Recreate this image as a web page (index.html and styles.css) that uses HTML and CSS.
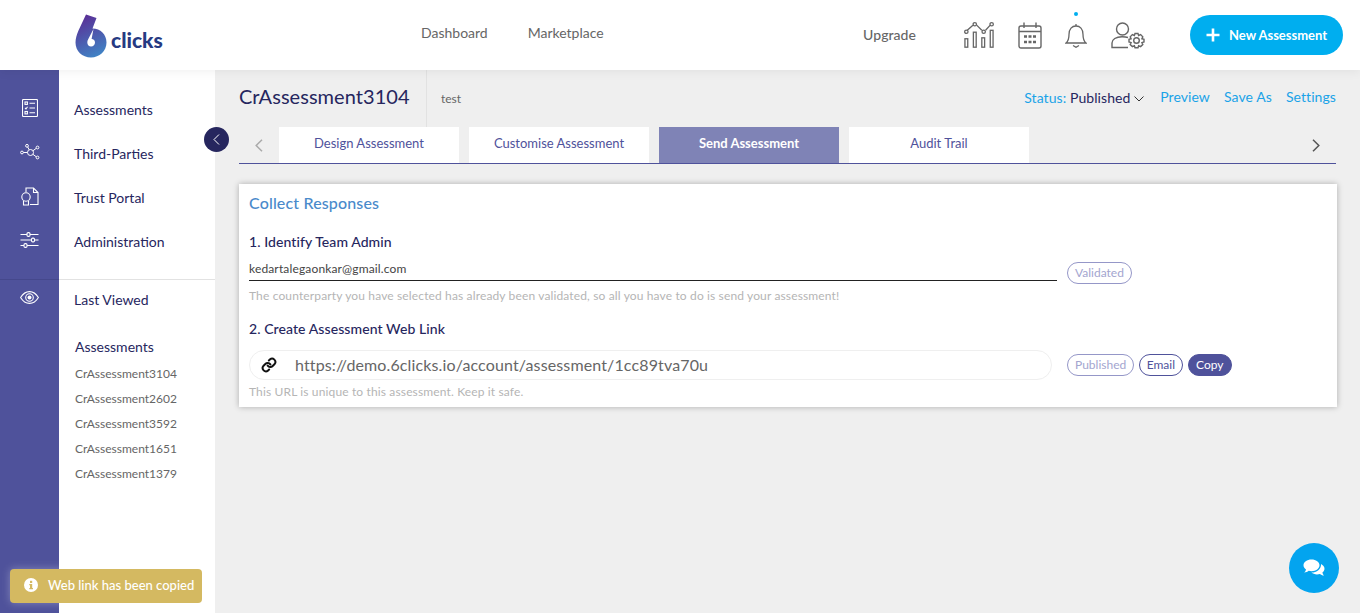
FILE: index.html
```html
<!DOCTYPE html>
<html lang="en">
<head>
    <meta charset="utf-8">
    <meta name="viewport" content="width=device-width, initial-scale=1.0">
    <title>6clicks - Send Assessment</title>
    <link rel="stylesheet" href="styles.css">
</head>
<body>
    <header class="topbar">
        <div class="logo">
            <svg class="logo-mark" width="32" height="44" viewBox="0 0 32 44">
                <defs>
                    <linearGradient id="logoGrad" x1="0.35" y1="0" x2="0.7" y2="1">
                        <stop offset="0" stop-color="#5a2f96"/>
                        <stop offset="1" stop-color="#3f85c6"/>
                    </linearGradient>
                </defs>
                <path fill="url(#logoGrad)" fill-rule="evenodd" d="M11 0.5 L21.5 4 L17.5 14.5 C25.5 14.5 31.5 20.5 31.5 28.5 C31.5 37 24.5 43.5 16 43.5 C7 43.5 0.5 37 0.5 28.5 C0.5 24.5 1.8 20.5 3.5 16.5 Z M18.5 15 L12.8 26 C11.8 28.2 12.3 32.5 16 32.5 C18.5 32.5 20 30.5 20 28.5 C20 26.5 18.5 25 16.6 25 Z"/>
            </svg>
            <span class="logo-text">clicks</span>
        </div>
        <nav class="topnav">
            <a>Dashboard</a>
            <a>Marketplace</a>
        </nav>
        <div class="topright">
            <a class="upgrade">Upgrade</a>
            <svg class="ico-analytics" width="30" height="28" viewBox="0 0 32 28" fill="none" stroke="#666" stroke-width="1.4">
                <rect x="1" y="18" width="3" height="9"/>
                <rect x="10" y="11" width="3" height="16"/>
                <rect x="19" y="17" width="3" height="10"/>
                <rect x="28" y="9" width="3" height="18"/>
                <path d="M3.5 9 L9.5 3.5 M13.5 3.5 L19 9 M23 9 L28 3.5"/>
                <circle cx="2.5" cy="10.5" r="1.8"/>
                <circle cx="11.5" cy="2.5" r="1.8"/>
                <circle cx="21" cy="10.5" r="1.8"/>
                <circle cx="29.5" cy="2.5" r="1.8"/>
            </svg>
            <svg class="ico-calendar" width="24" height="27" viewBox="0 0 24 27" fill="none" stroke="#666" stroke-width="1.4">
                <rect x="1" y="4" width="22" height="22" rx="2"/>
                <path d="M1 9.5 H23 M6 0.5 V6 M18 0.5 V6"/>
                <path stroke-width="2.6" d="M6 14.5 H9 M10.5 14.5 H13.5 M15 14.5 H18 M6 20 H9 M10.5 20 H13.5 M15 20 H18"/>
            </svg>
            <div class="bell">
                <span class="bell-dot"></span>
                <svg width="22" height="25" viewBox="0 0 22 25" fill="none" stroke="#666" stroke-width="1.3">
                    <path d="M1 20 C3.5 18 4 15.5 4 11.5 C4 6 7 3 11 3 C15 3 18 6 18 11.5 C18 15.5 18.5 18 21 20 Z"/>
                    <path d="M11 1 V3 M8 22.5 L11 24.3 L14 22.5"/>
                </svg>
            </div>
            <svg class="ico-user" width="34" height="27" viewBox="0 0 34 27" fill="none" stroke="#666" stroke-width="1.4">
                <circle cx="11.5" cy="7" r="6"/>
                <path d="M17 15.5 C15.5 15 13.5 14.7 11 14.7 C5 14.7 1 17.5 1 21 V25.5 H17"/>
                <circle cx="25.5" cy="18.5" r="2.8"/>
                <path d="M24 11.5 H27 L27.6 13.5 L29.6 12.6 L31.8 14.8 L30.9 16.7 L33 17.3 V20 L30.9 20.6 L31.8 22.5 L29.6 24.6 L27.6 23.7 L27 25.7 H24 L23.4 23.7 L21.4 24.6 L19.2 22.5 L20.1 20.6 L18 20 V17.3 L20.1 16.7 L19.2 14.8 L21.4 12.6 L23.4 13.5 Z"/>
            </svg>
            <button class="new-btn" type="button">
                <svg width="14" height="14" viewBox="0 0 14 14" fill="none" stroke="#fff" stroke-width="2.6"><path d="M7 0.5 V13.5 M0.5 7 H13.5"/></svg>
                <span>New Assessment</span>
            </button>
        </div>
    </header>

    <div class="layout">
        <aside class="rail">
            <div class="rail-top">
                <span class="rail-item">
                    <svg width="16" height="18" viewBox="0 0 16 18" fill="none" stroke="#fff" stroke-width="1.1">
                        <rect x="0.5" y="0.5" width="15" height="17" rx="1"/>
                        <rect x="3" y="3" width="2.4" height="2.4"/>
                        <rect x="3" y="12.5" width="2.4" height="2.4"/>
                        <path d="M3 9 L4 10 L5.5 7.8 M7.5 4.2 H13 M7.5 9 H13 M7.5 13.7 H13"/>
                    </svg>
                </span>
                <span class="rail-item">
                    <svg width="20" height="16" viewBox="0 0 20 16" fill="none" stroke="#fff" stroke-width="1">
                        <circle cx="10.5" cy="8.5" r="3"/>
                        <circle cx="7" cy="1.8" r="1.4"/>
                        <circle cx="17.5" cy="3.5" r="1.4"/>
                        <circle cx="17.5" cy="13.5" r="1.4"/>
                        <circle cx="2" cy="8.5" r="1.4"/>
                        <path d="M3.4 8.5 H7.5 M7.7 3 L9.2 5.8 M16.3 4.3 L12.9 6.8 M16.3 12.8 L12.9 10.3"/>
                    </svg>
                </span>
                <span class="rail-item">
                    <svg width="18" height="19" viewBox="0 0 18 19" fill="none" stroke="#fff" stroke-width="1.1">
                        <path d="M5 5 V1 H12.5 L17 5.5 V17.5 H9"/>
                        <path d="M12.5 1 V5.5 H17"/>
                        <circle cx="5" cy="10" r="4.2"/>
                        <path d="M2.5 14 V18 H7.5 V14"/>
                    </svg>
                </span>
                <span class="rail-item">
                    <svg width="19" height="16" viewBox="0 0 19 16" fill="none" stroke="#fff" stroke-width="1.1">
                        <path d="M0.5 2.5 H7 M10 2.5 H18.5 M0.5 8 H11.5 M14.5 8 H18.5 M0.5 13.5 H4 M7 13.5 H18.5"/>
                        <rect x="7" y="0.6" width="3" height="3.8" rx="1.2"/>
                        <rect x="11.5" y="6.1" width="3" height="3.8" rx="1.2"/>
                        <rect x="4" y="11.6" width="3" height="3.8" rx="1.2"/>
                    </svg>
                </span>
            </div>
            <div class="rail-bottom">
                <svg width="19" height="13" viewBox="0 0 19 13" fill="none" stroke="#fff" stroke-width="1.1">
                    <path d="M0.6 6.5 C3 2.5 6 0.6 9.5 0.6 C13 0.6 16 2.5 18.4 6.5 C16 10.5 13 12.4 9.5 12.4 C6 12.4 3 10.5 0.6 6.5 Z"/>
                    <circle cx="9.5" cy="6.5" r="3.8"/>
                    <circle cx="9.5" cy="6.5" r="2" fill="#fff" stroke="none"/>
                </svg>
            </div>
        </aside>

        <aside class="sidemenu">
            <ul class="menu-main">
                <li>Assessments</li>
                <li>Third-Parties</li>
                <li>Trust Portal</li>
                <li>Administration</li>
            </ul>
            <div class="menu-recent">
                <div class="recent-title">Last Viewed</div>
                <div class="recent-head">Assessments</div>
                <ul class="recent-list">
                    <li>CrAssessment3104</li>
                    <li>CrAssessment2602</li>
                    <li>CrAssessment3592</li>
                    <li>CrAssessment1651</li>
                    <li>CrAssessment1379</li>
                </ul>
            </div>
            <button class="collapse-btn" type="button" aria-label="Collapse">
                <svg width="7" height="11" viewBox="0 0 7 11" fill="none" stroke="#fff" stroke-width="1"><path d="M6 0.5 L1 5.5 L6 10.5"/></svg>
            </button>
        </aside>

        <main class="content">
            <div class="titlebar">
                <h1 class="page-title">CrAssessment3104</h1>
                <span class="page-sub">test</span>
                <div class="page-actions">
                    <span class="status"><span class="status-label">Status:</span> Published
                        <svg width="10" height="6" viewBox="0 0 10 6" fill="none" stroke="#333" stroke-width="1"><path d="M0.5 0.5 L5 5 L9.5 0.5"/></svg>
                    </span>
                    <a>Preview</a>
                    <a>Save As</a>
                    <a>Settings</a>
                </div>
            </div>

            <div class="tabs">
                <span class="tab-arrow">
                    <svg width="8" height="13" viewBox="0 0 8 13" fill="none" stroke="#aaa" stroke-width="1.5"><path d="M7 0.8 L1.2 6.5 L7 12.2"/></svg>
                </span>
                <a class="tab">Design Assessment</a>
                <a class="tab">Customise Assessment</a>
                <a class="tab tab-active">Send Assessment</a>
                <a class="tab">Audit Trail</a>
                <span class="tab-arrow tab-arrow-right">
                    <svg width="8" height="13" viewBox="0 0 8 13" fill="none" stroke="#555" stroke-width="1.5"><path d="M1 0.8 L6.8 6.5 L1 12.2"/></svg>
                </span>
            </div>

            <section class="card">
                <h2 class="card-title">Collect Responses</h2>
                <h3 class="step step-first">1. Identify Team Admin</h3>
                <div class="row row-email">
                    <div class="email-field">kedartalegaonkar@gmail.com</div>
                    <span class="pill pill-muted">Validated</span>
                </div>
                <p class="hint">The counterparty you have selected has already been validated, so all you have to do is send your assessment!</p>
                <h3 class="step step-second">2. Create Assessment Web Link</h3>
                <div class="row row-link">
                    <div class="link-field">
                        <svg width="16" height="16" viewBox="0 0 24 24" fill="none" stroke="#111" stroke-width="3" stroke-linecap="round" stroke-linejoin="round">
                            <path d="M10 13a5 5 0 0 0 7.5.5l3-3a5 5 0 0 0-7-7l-1.7 1.7"/>
                            <path d="M14 11a5 5 0 0 0-7.5-.5l-3 3a5 5 0 0 0 7 7l1.7-1.7"/>
                        </svg>
                        <span class="link-url">https://demo.6clicks.io/account/assessment/1cc89tva70u</span>
                    </div>
                    <div class="pills">
                        <span class="pill pill-muted">Published</span>
                        <span class="pill pill-outline">Email</span>
                        <span class="pill pill-solid">Copy</span>
                    </div>
                </div>
                <p class="hint hint-last">This URL is unique to this assessment. Keep it safe.</p>
            </section>
        </main>
    </div>

    <div class="toast">
        <svg width="14" height="14" viewBox="0 0 14 14">
            <circle cx="7" cy="7" r="7" fill="#fff"/>
            <rect x="6" y="2.8" width="2.2" height="2.2" fill="#d4b961"/>
            <path d="M5.3 6 H8.2 V10 H9 V11.2 H5.3 V10 H6 V7.2 H5.3 Z" fill="#d4b961"/>
        </svg>
        <span>Web link has been copied</span>
    </div>

    <button class="chat-btn" type="button" aria-label="Chat">
        <svg width="22" height="18" viewBox="0 0 22 18" fill="#fff">
            <path d="M8.5 0.5 C13 0.5 16.5 3 16.5 6.3 C16.5 9.6 13 12.2 8.5 12.2 C7.5 12.2 6.6 12 5.7 11.8 C4.5 12.8 3 13.5 1.2 13.6 C2.2 12.7 2.8 11.6 3 10.4 C1.4 9.4 0.5 7.9 0.5 6.3 C0.5 3 4 0.5 8.5 0.5 Z"/>
            <path d="M18 5 C20 6 21.5 7.7 21.5 9.8 C21.5 11.3 20.7 12.6 19.4 13.6 C19.6 14.8 20.2 15.8 21 16.6 C19.4 16.5 18 15.9 16.9 15 C16 15.3 15 15.4 14 15.4 C11.8 15.4 9.8 14.7 8.4 13.6 C13.8 13.6 18.3 10.4 18 5 Z"/>
        </svg>
    </button>
</body>
</html>
```

FILE: styles.css
```css
* {
    box-sizing: border-box;
}

html, body {
    height: 100%;
}

body {
    margin: 0;
    font-family: Lato, 'Liberation Sans', sans-serif;
    background-color: #efefef;
    color: #26265e;
    overflow: hidden;
}

ul {
    list-style: none;
    margin: 0;
    padding: 0;
}

/* top bar */
.topbar {
    display: flex;
    align-items: center;
    height: 70px;
    background-color: #ffffff;
    position: relative;
    z-index: 2;
    box-shadow: 0 2px 10px rgba(0, 0, 0, 0.06);
}

.logo {
    width: 421px;
    padding-left: 75px;
    display: flex;
    align-items: flex-end;
    height: 44px;
    margin-top: 1px;
}

.logo-text {
    font-size: 21px;
    font-weight: 900;
    color: #263a82;
    margin-left: 4px;
    margin-bottom: 7px;
    line-height: 22px;
}

.topnav {
    display: flex;
    gap: 40px;
    font-size: 14px;
    color: #666;
    margin-top: -6px;
}

.topright {
    margin-left: auto;
    display: flex;
    align-items: center;
    padding-right: 17px;
}

.upgrade {
    font-size: 14px;
    font-weight: 500;
    letter-spacing: 0.05px;
    color: #666;
    margin-right: 48px;
    margin-top: -2px;
}

.ico-analytics {
    margin-right: 24px;
}

.ico-calendar {
    margin-right: 23px;
}

.bell {
    position: relative;
    display: flex;
    margin-right: 24px;
}

.bell-dot {
    position: absolute;
    top: -11px;
    left: 9px;
    width: 4px;
    height: 4px;
    border-radius: 50%;
    background-color: #00aeef;
}

.ico-user {
    margin-right: 45px;
}

.new-btn {
    display: flex;
    align-items: center;
    gap: 9px;
    width: 153px;
    height: 40px;
    padding: 0 0 0 16px;
    border: none;
    border-radius: 20px;
    background-color: #00aeef;
    color: #fff;
    font-family: inherit;
    font-size: 13px;
    font-weight: 700;
    letter-spacing: -0.02px;
}

/* layout */
.layout {
    display: flex;
    height: 543px;
}

.rail {
    flex-shrink: 0;
    width: 59px;
    background-color: #4f529b;
    display: flex;
    flex-direction: column;
}

.rail-top {
    height: 210px;
    padding-top: 16px;
    border-bottom: 1px solid #45488c;
}

.rail-item {
    display: flex;
    align-items: center;
    justify-content: center;
    height: 44px;
}

.rail-bottom {
    display: flex;
    justify-content: center;
    padding-top: 11px;
}

.sidemenu {
    flex-shrink: 0;
    width: 156px;
    background-color: #ffffff;
    position: relative;
    font-size: 14px;
}

.menu-main {
    height: 210px;
    padding-top: 18px;
    padding-left: 15px;
    border-bottom: 1px solid #e2e2e2;
}

.menu-main li {
    height: 44px;
    line-height: 44px;
    color: #26265e;
}

.menu-recent {
    padding-left: 15px;
}

.recent-title {
    margin-top: 11px;
    line-height: 17px;
}

.recent-head {
    margin-top: 30px;
    margin-left: 1px;
    line-height: 17px;
}

.recent-list {
    margin-top: 6px;
    margin-left: 1px;
    font-size: 12px;
    color: #666;
}

.recent-list li {
    height: 25px;
    line-height: 25px;
}

.collapse-btn {
    position: absolute;
    top: 57px;
    right: -14px;
    width: 25px;
    height: 25px;
    border: none;
    border-radius: 50%;
    background-color: #26265e;
    display: flex;
    align-items: center;
    justify-content: center;
    padding: 0;
    z-index: 1;
}

/* main area */
.content {
    flex: 1;
    min-width: 0;
    padding: 0 24px;
}

.titlebar {
    display: flex;
    align-items: center;
    height: 57px;
}

.page-title {
    margin: 0;
    width: 188px;
    height: 57px;
    line-height: 52px;
    font-size: 20px;
    letter-spacing: 0.05px;
    font-weight: 400;
    color: #26265e;
    border-right: 1px solid #e2e2e2;
}

.page-sub {
    margin-left: 14px;
    font-size: 12px;
    color: #666;
    margin-top: -1px;
}

.page-actions {
    margin-left: auto;
    display: flex;
    align-items: center;
    gap: 14px;
    font-size: 14px;
    letter-spacing: 0.08px;
    color: #1aa3e8;
    margin-top: -5px;
}

.status {
    color: #26265e;
    margin-right: 2px;
    margin-top: 2px;
}

.status-label {
    color: #1aa3e8;
}

.status svg {
    margin-left: 0;
    vertical-align: 1px;
}

.tabs {
    display: flex;
    height: 37px;
    gap: 10px;
    border-bottom: 1px solid #4f529b;
}

.tab-arrow {
    width: 30px;
    padding-left: 10px;
    display: flex;
    align-items: center;
    justify-content: center;
}

.tab-arrow-right {
    margin-left: auto;
    padding-left: 0;
    margin-right: 5px;
}

.tab {
    width: 180px;
    height: 36px;
    line-height: 33px;
    text-align: center;
    background-color: #ffffff;
    font-size: 13px;
    color: #4f529b;
}

.tab-active {
    background-color: #7f83b6;
    color: #ffffff;
    font-weight: 700;
}

.card {
    margin-top: 20px;
    margin-right: -1px;
    height: 223px;
    padding: 9px 10px 10px;
    background-color: #ffffff;
    box-shadow: 0 0 6px rgba(0, 0, 0, 0.28);
}

.card-title {
    margin: 0;
    font-size: 16px;
    font-weight: 500;
    line-height: 19px;
    letter-spacing: 0.15px;
    color: #4a8acb;
}

.step {
    margin: 0;
    font-size: 14px;
    font-weight: 500;
    line-height: 17px;
    letter-spacing: 0.08px;
    color: #26265e;
}

.step-first {
    margin-top: 21px;
}

.step-second {
    margin-top: 17px;
}

.row {
    display: flex;
    align-items: center;
}

.row-email {
    align-items: flex-start;
}

.email-field {
    width: 808px;
    height: 22px;
    margin-top: 9px;
    line-height: 20px;
    font-size: 12px;
    letter-spacing: 0.15px;
    color: #444;
    border-bottom: 1px solid #222;
}

.email-field + .pill {
    margin-left: 10px;
    margin-top: 12px;
}

.hint {
    margin: 4px 0 0;
    font-size: 12px;
    line-height: 15px;
    letter-spacing: 0.14px;
    color: #b5b5b5;
}

.hint-last {
    margin-top: 4px;
}

.row-link {
    margin-top: 13px;
}

.link-field {
    display: flex;
    align-items: center;
    width: 803px;
    height: 30px;
    padding-left: 11px;
    border: 1px solid #efefef;
    border-radius: 15px;
}

.link-url {
    margin-left: 18px;
    margin-top: -2px;
    font-size: 16px;
    letter-spacing: 0.13px;
    color: #666;
}

.pills {
    display: flex;
    gap: 5px;
    margin-left: 15px;
}

.pill {
    display: inline-block;
    height: 22px;
    padding: 0 7px;
    line-height: 20px;
    font-size: 12px;
    border-radius: 11px;
    border: 1px solid #4f529b;
}

.pill-muted {
    border-color: #9597c8;
    color: #a3a5cf;
}

.pill-outline {
    padding: 0 6.5px;
    color: #4f529b;
}

.pill-solid {
    padding: 0 7.5px;
    background-color: #4f529b;
    color: #ffffff;
}

/* floating bits */
.toast {
    position: absolute;
    left: 10px;
    top: 569px;
    display: flex;
    align-items: center;
    gap: 10px;
    width: 192px;
    height: 34px;
    padding: 0 0 2px 14px;
    border-radius: 4px;
    background-color: #d4b961;
    color: #ffffff;
    font-size: 13px;
    font-weight: 500;
    box-shadow: 0 0 8px rgba(255, 255, 255, 0.3);
    z-index: 3;
}

.chat-btn {
    position: absolute;
    left: 1289px;
    top: 543px;
    width: 50px;
    height: 50px;
    padding: 0;
    border: none;
    border-radius: 50%;
    background-color: #03a4ef;
    display: flex;
    align-items: center;
    justify-content: center;
}
```
